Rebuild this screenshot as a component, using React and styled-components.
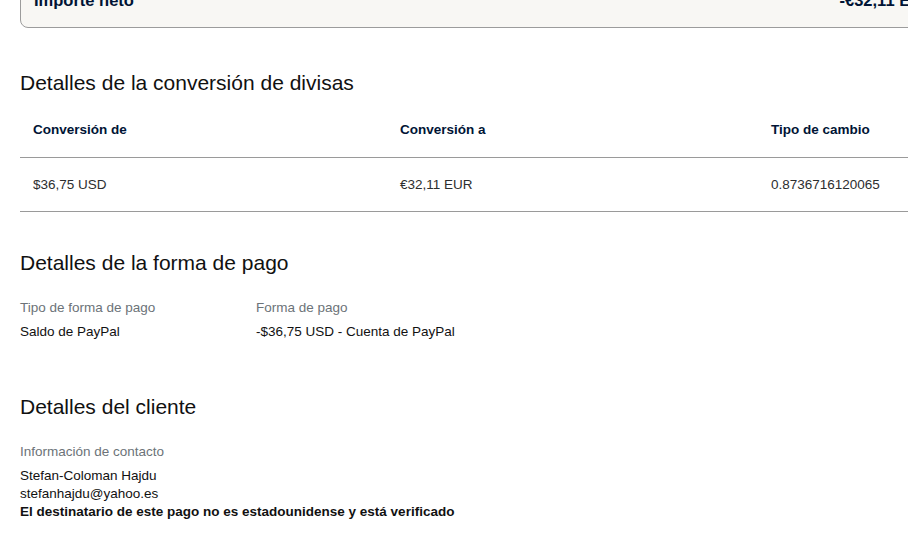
import React from 'react'
import styled, { createGlobalStyle } from 'styled-components'

const GlobalStyle = createGlobalStyle`
  html, body {
    margin: 0;
    padding: 0;
    background: #ffffff;
    overflow: hidden;
  }
  body {
    font-family: Arial, "Liberation Sans", Helvetica, sans-serif;
    color: #2c2e2f;
  }
`

const Page = styled.div`
  width: 927px;
  padding: 0 0 0 20px;
`

const SummaryCard = styled.div`
  margin-top: -28px;
  height: 56px;
  box-sizing: border-box;
  padding: 0 12px 0 13px;
  display: flex;
  align-items: flex-end;
  justify-content: space-between;
  background: #f8f7f4;
  border: 1px solid #9c9c9c;
  border-radius: 8px;
`

const SummaryText = styled.span`
  font-size: 16.5px;
  font-weight: 700;
  color: #001435;
  line-height: 18px;
  padding-bottom: 18px;
`

const Heading = styled.h2`
  margin: ${p => p.$top}px 0 0;
  font-size: 21px;
  font-weight: 400;
  line-height: 28px;
  color: #111111;
`

const Table = styled.div`
  margin-top: 4px;
  display: grid;
  grid-template-columns: 367px 371px 1fr;
`

const HeadCell = styled.div`
  height: 56px;
  display: flex;
  align-items: center;
  padding-left: 13px;
  font-size: 13.5px;
  font-weight: 700;
  color: #001435;
  border-bottom: 1px solid #9a9a9a;
`

const Cell = styled.div`
  height: 53px;
  display: flex;
  align-items: center;
  padding-left: 13px;
  font-size: 13.5px;
  color: #2c2e2f;
  border-bottom: 1px solid #9a9a9a;
`

const Pairs = styled.div`
  margin-top: 19px;
  display: grid;
  grid-template-columns: 236px auto;
  justify-content: start;
`

const Label = styled.div`
  font-size: 13.5px;
  line-height: 24px;
  color: #6c7378;
`

const Value = styled.div`
  font-size: 13.5px;
  line-height: 24px;
  color: #111111;
`

const Contact = styled.div`
  margin-top: 22px;
  display: flex;
  flex-direction: column;
`

const ContactLabel = styled.div`
  font-size: 13.5px;
  line-height: 18px;
  color: #6c7378;
  margin-bottom: 6px;
`

const ContactLine = styled.div`
  font-size: 13.5px;
  line-height: 18px;
  color: #111111;
  font-weight: ${p => (p.$bold ? 700 : 400)};
`

const App = () => {
  return (
    <>
      <GlobalStyle />
      <Page>
        <SummaryCard>
          <SummaryText>Importe neto</SummaryText>
          <SummaryText>-€32,11 EUR</SummaryText>
        </SummaryCard>

        <Heading $top={41}>Detalles de la conversión de divisas</Heading>
        <Table>
          <HeadCell>Conversión de</HeadCell>
          <HeadCell>Conversión a</HeadCell>
          <HeadCell>Tipo de cambio</HeadCell>
          <Cell>$36,75 USD</Cell>
          <Cell>€32,11 EUR</Cell>
          <Cell>0.8736716120065</Cell>
        </Table>

        <Heading $top={37}>Detalles de la forma de pago</Heading>
        <Pairs>
          <Label>Tipo de forma de pago</Label>
          <Label>Forma de pago</Label>
          <Value>Saldo de PayPal</Value>
          <Value>-$36,75 USD - Cuenta de PayPal</Value>
        </Pairs>

        <Heading $top={49}>Detalles del cliente</Heading>
        <Contact>
          <ContactLabel>Información de contacto</ContactLabel>
          <ContactLine>Stefan-Coloman Hajdu</ContactLine>
          <ContactLine>stefanhajdu@yahoo.es</ContactLine>
          <ContactLine $bold>El destinatario de este pago no es estadounidense y está verificado</ContactLine>
        </Contact>
      </Page>
    </>
  )
}

export default App
